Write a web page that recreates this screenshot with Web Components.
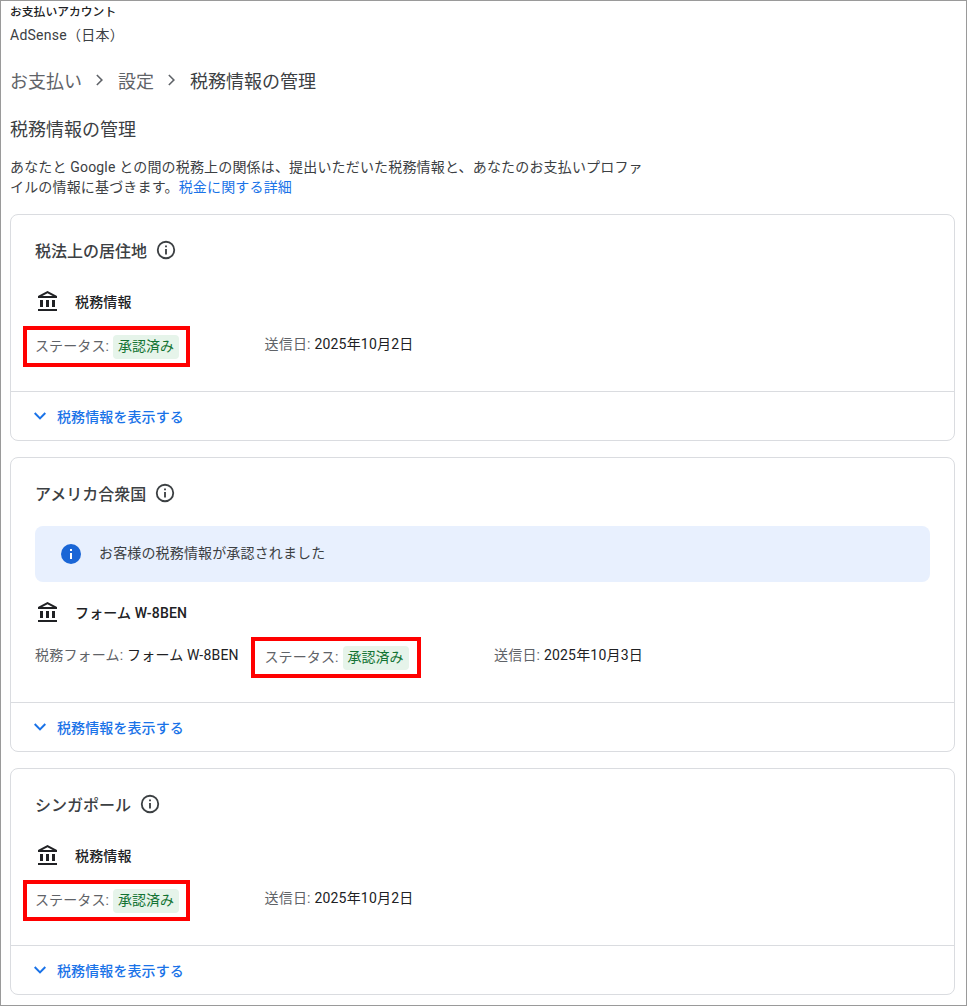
<!DOCTYPE html>
<html lang="ja">
<head>
<meta charset="utf-8">
<title>税務情報の管理</title>
<style>
    html, body { margin: 0; background: #fff; }
    body {
        font-family: Roboto, "Noto Sans CJK JP", sans-serif;
        color: #202124;
    }
</style>
</head>
<body>
<tax-page>
    <account-header slot="header" label="お支払いアカウント" name="AdSense（日本）"></account-header>
    <bread-crumbs slot="header">
        <span>お支払い</span>
        <span>設定</span>
        <span>税務情報の管理</span>
    </bread-crumbs>

    <tax-card heading="税法上の居住地">
        <form-row name="税務情報">
            <status-item marked></status-item>
            <meta-item label="送信日:">2025年10月2日</meta-item>
        </form-row>
    </tax-card>

    <tax-card heading="アメリカ合衆国">
        <info-banner slot="banner">お客様の税務情報が承認されました</info-banner>
        <form-row name="フォーム W-8BEN" style="--row-top: 18px">
            <meta-item label="税務フォーム:">フォーム W-8BEN</meta-item>
            <status-item marked style="--mark-left: -14px; --mark-width: 162px"></status-item>
            <meta-item label="送信日:">2025年10月3日</meta-item>
        </form-row>
    </tax-card>

    <tax-card heading="シンガポール">
        <form-row name="税務情報">
            <status-item marked></status-item>
            <meta-item label="送信日:">2025年10月2日</meta-item>
        </form-row>
    </tax-card>
</tax-page>

<script>
const FONT = `Roboto, "Noto Sans CJK JP", sans-serif`;

// ページ全体
customElements.define("tax-page", class extends HTMLElement {
    constructor() {
        super();
        this.attachShadow({ mode: "open" }).innerHTML = /*html*/ `
        <style>
            :host {
                display: block;
                box-sizing: border-box;
                width: 967px;
                height: 1006px;
                overflow: hidden;
                border: 1px solid #9a9a9a;
                padding: 0 11px 0 9px;
                font-family: ${FONT};
            }
            h1 {
                margin: 0;
                padding-top: 24px;
                font-size: 18px;
                line-height: 24px;
                font-weight: 400;
                color: #3c4043;
            }
            p {
                margin: 0;
                padding-top: 15px;
                width: 640px;
                font-size: 14px;
                line-height: 20px;
                letter-spacing: .17px;
                color: #3c4043;
            }
            a { color: #1a73e8; text-decoration: none; }
            .cards {
                display: flex;
                flex-direction: column;
                gap: 16px;
                margin-top: 17px;
            }
        </style>
        <slot name="header"></slot>
        <h1>税務情報の管理</h1>
        <p>あなたと Google との間の税務上の関係は、提出いただいた税務情報と、あなたのお支払いプロファイルの情報に基づきます。<a href="#">税金に関する詳細</a></p>
        <div class="cards"><slot></slot></div>`;
    }
});

customElements.define("account-header", class extends HTMLElement {
    connectedCallback() {
        this.attachShadow({ mode: "open" }).innerHTML = /*html*/ `
        <style>
            :host { display: block; padding-top: 3px; }
            .label { font-size: 11.8px; line-height: 16px; font-weight: 500; color: #202124; }
            .name { font-size: 14px; line-height: 20px; margin-top: 5px; letter-spacing: .25px; color: #3c4043; }
        </style>
        <div class="label">${this.getAttribute("label")}</div>
        <div class="name">${this.getAttribute("name")}</div>`;
    }
});

customElements.define("bread-crumbs", class extends HTMLElement {
    connectedCallback() {
        const items = [...this.querySelectorAll("span")].map(s => s.textContent);
        const chevron = `<svg width="24" height="24" viewBox="0 0 24 24" fill="#5f6368"><path d="M9.400 6.400 8.300 7.500l4.500 4.500-4.500 4.500 1.100 1.100 5.600-5.600z"/></svg>`;
        this.attachShadow({ mode: "open" }).innerHTML = /*html*/ `
        <style>
            :host {
                display: flex;
                align-items: center;
                gap: 6px;
                margin-top: 21px;
                height: 28px;
                font-size: 18px;
                color: #5f6368;
            }
            .last { color: #3c4043; }
            svg { flex: none; }
        </style>
        ${items.map((t, i) => `<div class="${i === items.length - 1 ? "last" : ""}">${t}</div>`).join(chevron)}`;
    }
});

customElements.define("tax-card", class extends HTMLElement {
    connectedCallback() {
        this.attachShadow({ mode: "open" }).innerHTML = /*html*/ `
        <style>
            :host {
                display: block;
                border: 1px solid #dadce0;
                border-radius: 8px;
                background: #fff;
            }
            .body { padding: 23px 24px 14px; }
            .title {
                display: flex;
                align-items: center;
                gap: 8px;
                height: 24px;
                font-size: 16px;
                font-weight: 500;
                color: #3c4043;
            }
            .title svg { flex: none; }
            .toggle {
                display: flex;
                align-items: center;
                gap: 5px;
                height: 49px;
                box-sizing: border-box;
                border-top: 1px solid #dadce0;
                padding-left: 17px;
                font-size: 14px;
                font-weight: 500;
                letter-spacing: .1px;
                color: #1a73e8;
            }
            ::slotted(info-banner) { margin-top: 21px; }
        </style>
        <div class="body">
            <div class="title">
                <span>${this.getAttribute("heading")}</span>
                <svg width="22" height="22" viewBox="0 0 24 24" fill="#3c4043"><path d="M11 7h2v2h-2zm0 4h2v6h-2zm1-9a10 10 0 1 0 0 20 10 10 0 0 0 0-20zm0 18a8 8 0 1 1 0-16 8 8 0 0 1 0 16z"/></svg>
            </div>
            <slot name="banner"></slot>
            <slot></slot>
        </div>
        <div class="toggle">
            <svg width="24" height="24" viewBox="0 0 24 24" fill="#1a73e8"><path d="M7.400 8.300 12 12.900l4.600-4.600L18 9.700l-6 6-6-6z"/></svg>
            <span>税務情報を表示する</span>
        </div>`;
    }
});

customElements.define("info-banner", class extends HTMLElement {
    constructor() {
        super();
        this.attachShadow({ mode: "open" }).innerHTML = /*html*/ `
        <style>
            :host {
                display: flex;
                align-items: center;
                gap: 16px;
                height: 56px;
                padding-left: 24px;
                background: #e8f0fe;
                border-radius: 8px;
                font-size: 14px;
                letter-spacing: .15px;
                color: #3c4043;
            }
            svg { flex: none; }
            span { position: relative; top: -2px; }
        </style>
        <svg width="24" height="24" viewBox="0 0 24 24"><circle cx="12" cy="12" r="10" fill="#1a66d6"/><path fill="#fff" d="M11 11h2v6h-2zm0-4h2v2h-2z"/></svg>
        <span><slot></slot></span>`;
    }
});

customElements.define("form-row", class extends HTMLElement {
    connectedCallback() {
        this.attachShadow({ mode: "open" }).innerHTML = /*html*/ `
        <style>
            :host { display: block; margin-top: var(--row-top, 27px); }
            .name {
                display: flex;
                align-items: center;
                gap: 16px;
                height: 24px;
                font-size: 14px;
                font-weight: 500;
                letter-spacing: .15px;
                color: #202124;
            }
            .name svg { flex: none; }
            .cols {
                display: grid;
                grid-template-columns: repeat(auto-fill, 229.5px);
                align-items: center;
                margin-top: 19px;
                min-height: 24px;
                padding-bottom: 21px;
            }
        </style>
        <div class="name">
            <svg width="24" height="24" viewBox="-1 -1 24 24" fill="#202124"><path d="M7 10H4v7h3zm6 0h-3v7h3zm6 0h-3v7h3zm2 9H2v2h19zM11.500 3.260 16.710 6H6.290zM11.500 1 2 6v2h19V6z"/></svg>
            <span>${this.getAttribute("name")}</span>
        </div>
        <div class="cols"><slot></slot></div>`;
    }
});

customElements.define("meta-item", class extends HTMLElement {
    connectedCallback() {
        const label = this.getAttribute("label");
        this.attachShadow({ mode: "open" }).innerHTML = /*html*/ `
        <style>
            :host { display: block; font-size: 14px; line-height: 20px; letter-spacing: .2px; color: #202124; }
            .label { color: #5f6368; }
        </style>
        <span class="label">${label}</span> <slot></slot>`;
    }
});

customElements.define("status-item", class extends HTMLElement {
    constructor() {
        super();
        this.attachShadow({ mode: "open" }).innerHTML = /*html*/ `
        <style>
            :host {
                display: flex;
                align-items: center;
                gap: 4px;
                position: relative;
                font-size: 14px;
                line-height: 20px;
                letter-spacing: .1px;
                color: #5f6368;
                top: 3px;
            }
            .label { position: relative; top: -1px; }
            .chip {
                background: #e6f4ea;
                color: #137333;
                border-radius: 4px;
                padding: 1px 5px 3px;
                letter-spacing: 0;
            }
            :host([marked])::after {
                content: "";
                position: absolute;
                left: var(--mark-left, -12px);
                top: -9px;
                width: var(--mark-width, 159px);
                height: 33px;
                border: 4px solid #f00;
            }
        </style>
        <span class="label">ステータス:</span><span class="chip">承認済み</span>`;
    }
});
</script>
</body>
</html>
